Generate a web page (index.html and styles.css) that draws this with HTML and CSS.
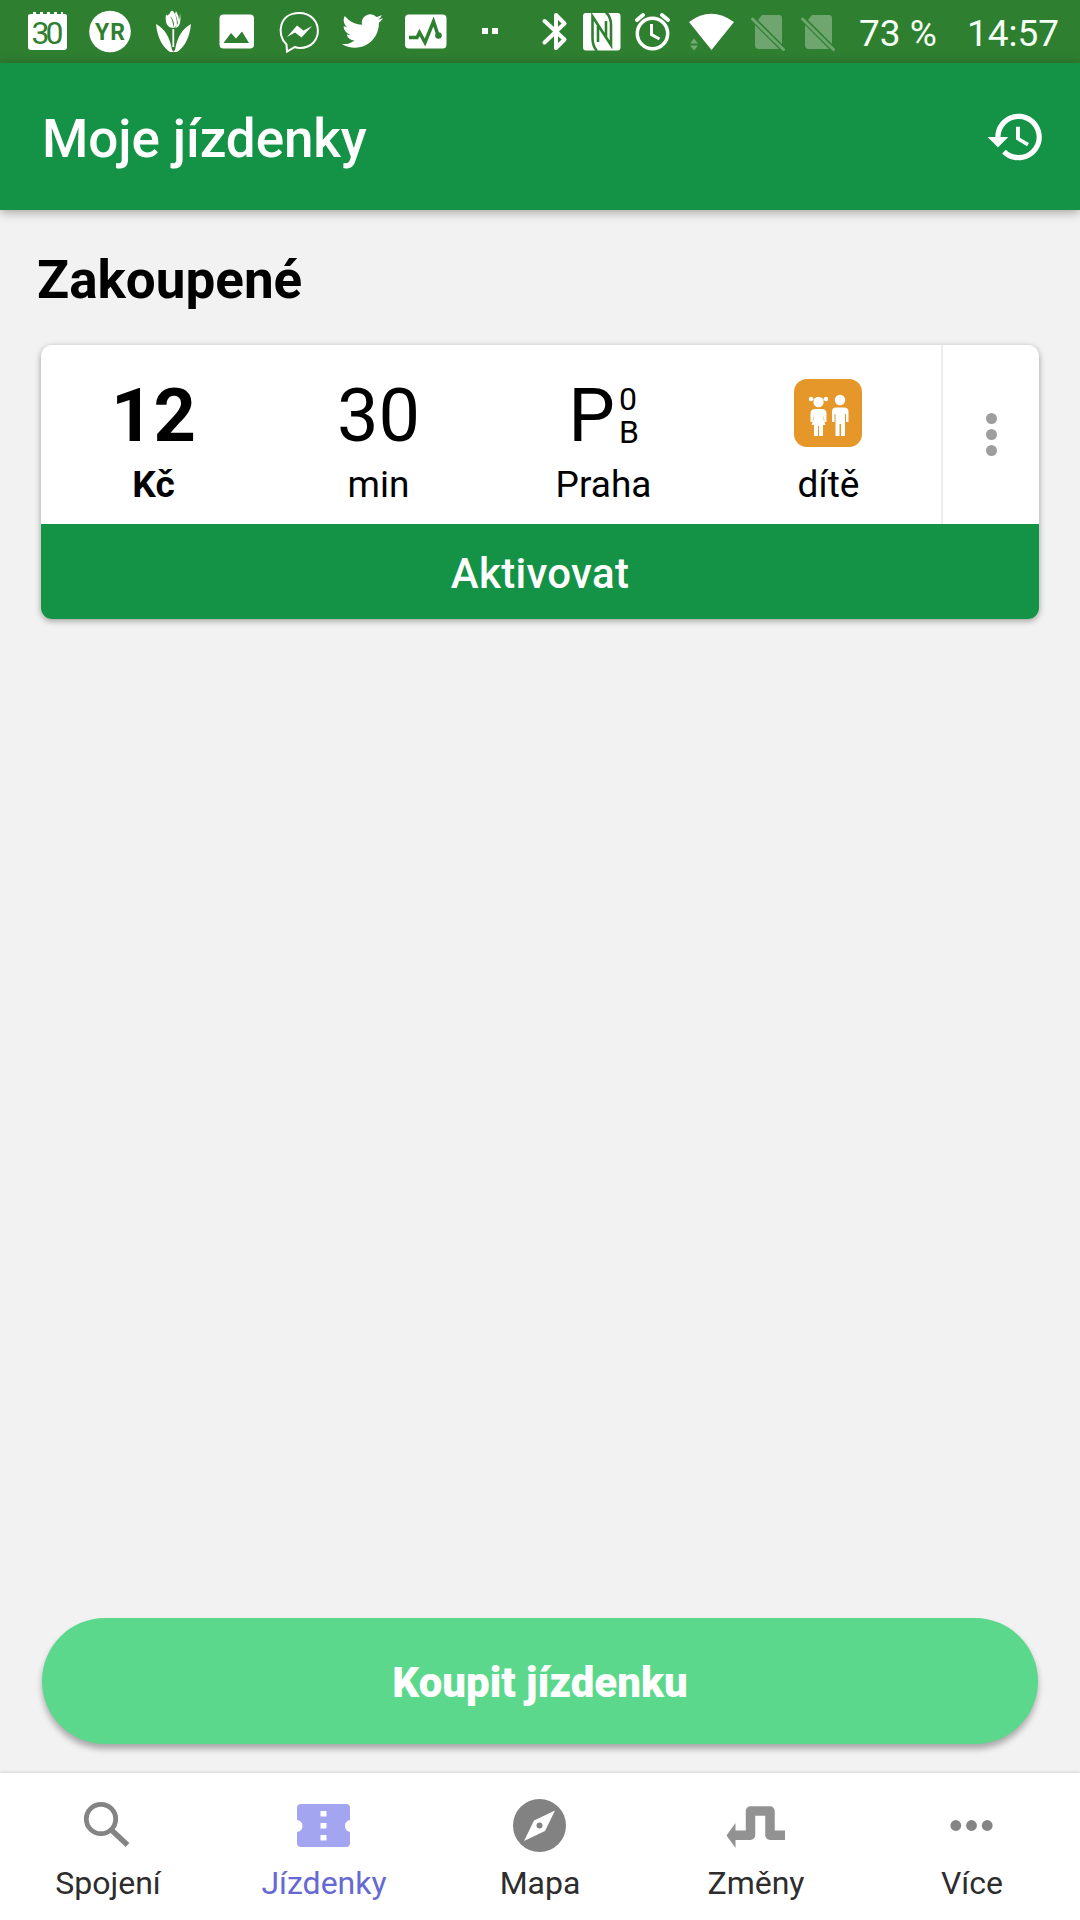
FILE: index.html
```html
<!DOCTYPE html>
<html lang="cs">
<head>
  <meta charset="UTF-8">
  <title>Moje jízdenky</title>
  <link rel="stylesheet" href="styles.css">
</head>
<body>

  <div class="status-bar">
    <div class="status-left">
      <svg viewBox="0 0 48 48">
        <path fill="#fff" d="M8 6h2V4h3v2h4V4h3v2h4V4h3v2h4V4h3v2h4V4h2v2h2q2 0 2 2v31q0 3-3 3H8q-3 0-3-3V8q0-2 3-2z"/>
        <text x="24.5" y="35.5" class="cal-text" textLength="32">30</text>
      </svg>
      <svg viewBox="0 0 48 48">
        <circle cx="24" cy="23.5" r="20.8" fill="#fff"/>
        <text x="24" y="32" class="yr-text" textLength="30">YR</text>
      </svg>
      <svg viewBox="0 0 48 48" fill="#fff">
        <path d="M17 6q1 3 3 0l3 6 2 8q-10 0-8-14zM21 5q1-3 3-2 4 5 4 14l-3 3q1-8-5-13zM27 3q3 5 3 9l-1 4q-1-7-3-10zM31 5q2 14-5 15 5-6 5-15z"/>
        <path d="M23.4 21h1.8v18h-1.8zM7 16q13 7 16 26l2 2h-4Q9 36 7 16zM42 16q-13 7-16 26l-2 2h4Q40 36 42 16z"/>
      </svg>
      <svg viewBox="0 0 48 48">
        <rect x="7.5" y="6.5" width="34.5" height="34" rx="4" fill="#fff"/>
        <path fill="#2f7f31" d="M11.5 35L19 25l5 5.5 6-7L37 35z"/>
      </svg>
      <svg viewBox="0 0 48 48">
        <path fill="none" stroke="#fff" stroke-width="2" d="M11.5 36.5C1 27 4 5 24 5c25 0 25 35 1 35q-3 0-5-1l-8 4.5z"/>
        <path fill="#fff" d="M12 29l10-11.5 6.500 5L37 18 26.500 29.500 20 24.500z"/>
      </svg>
      <svg viewBox="0 0 48 48">
        <path fill="#fff" transform="translate(4 2.5) scale(1.71)" d="M23.950 4.570a10 10 0 01-2.820.770 4.960 4.960 0 002.160-2.720c-.950.550-2 .950-3.130 1.180a4.920 4.920 0 00-8.380 4.480C7.690 8.090 4.070 6.130 1.640 3.160a4.820 4.820 0 00-.670 2.480c0 1.710.870 3.210 2.190 4.100a4.900 4.900 0 01-2.230-.620v.060a4.920 4.920 0 003.950 4.830 5 5 0 01-2.210.080 4.940 4.940 0 004.600 3.420A9.870 9.870 0 010 19.540a14 14 0 007.560 2.210c9.050 0 14-7.500 14-13.980 0-.210 0-.420-.020-.630a9.940 9.940 0 002.460-2.550z"/>
      </svg>
      <svg viewBox="0 0 48 48">
        <rect x="4" y="6.5" width="41.500" height="34" rx="4" fill="#fff"/>
        <path fill="none" stroke="#2f7f31" stroke-width="3.5" d="M8 29.500h8l2.500-5L24 34.500l8.500-21L37 27"/>
        <circle cx="37.500" cy="27.500" r="3.300" fill="#2f7f31"/>
      </svg>
      <svg viewBox="0 0 48 48">
        <path fill="#fff" d="M18 20h6v6h-6zM28 20h6v6h-6z"/>
      </svg>
    </div>
    <div class="status-right">
      <svg viewBox="0 0 48 48">
        <path fill="none" stroke="#fff" stroke-width="4" stroke-linecap="round" stroke-linejoin="round" d="M14.500 13l20 18.500-8.500 8.500V7l8.500 8.500-20 19"/>
      </svg>
      <svg viewBox="0 0 48 48">
        <rect x="3" y="5" width="37.500" height="37.500" rx="3" fill="#fff"/>
        <path fill="none" stroke="#2f7f31" stroke-width="2.600" d="M17 43q-4.500-5-4.500-13V8.500L31 37V17q0-8-5-12.500M18 34V18M26 29V13"/>
      </svg>
      <svg viewBox="0 0 48 48">
        <circle cx="22.500" cy="25.500" r="15.200" fill="none" stroke="#fff" stroke-width="3.500"/>
        <path fill="none" stroke="#fff" stroke-width="3" d="M21.500 16v10.500l8 4.500"/>
        <path fill="none" stroke="#fff" stroke-width="4" stroke-linecap="round" d="M7 12l6-5M38 12l-6-5"/>
      </svg>
      <svg class="wifi" viewBox="0 0 58 48">
        <path fill="#fff" d="M9 14q22-16.500 45 0L31.500 42z"/>
        <path fill="#74a974" d="M10 35.500l4-5 4 5zM10 37.500l4 5 4-5z"/>
      </svg>
      <svg viewBox="0 0 48 48">
        <path fill="#6fa66f" d="M22 7h17q3 0 3 3v26L18 12zM15 17l24 24H19q-4 0-4-4z"/>
        <path stroke="#6fa66f" stroke-width="3" stroke-linecap="round" d="M12.500 11l31 30.500"/>
      </svg>
      <svg viewBox="0 0 48 48">
        <path fill="#6fa66f" d="M22 7h17q3 0 3 3v26L18 12zM15 17l24 24H19q-4 0-4-4z"/>
        <path stroke="#6fa66f" stroke-width="3" stroke-linecap="round" d="M12.500 11l31 30.500"/>
      </svg>
      <span class="battery">73 %</span>
      <span class="clock">14:57</span>
    </div>
  </div>

  <header class="app-header">
    <h1>Moje jízdenky</h1>
    <svg class="history-icon" viewBox="0 0 24 24" fill="#fff">
      <path d="M13 3c-4.970 0-9 4.030-9 9H1l3.890 3.890.07.14L9 12H6c0-3.870 3.130-7 7-7s7 3.130 7 7-3.130 7-7 7c-1.930 0-3.680-.79-4.940-2.060l-1.420 1.420C8.270 19.990 10.510 21 13 21c4.970 0 9-4.030 9-9s-4.030-9-9-9zm-1 5v5l4.280 2.540.72-1.210-3.500-2.080V8H12z"/>
    </svg>
  </header>

  <main class="content">
    <h2>Zakoupené</h2>
    <div class="ticket">
      <div class="ticket-body">
        <div class="ticket-col price">
          <div class="value">12</div>
          <div class="label">Kč</div>
        </div>
        <div class="ticket-col">
          <div class="value">30</div>
          <div class="label">min</div>
        </div>
        <div class="ticket-col">
          <div class="value zone">
            <span>P</span>
            <div class="zone-sub"><span>0</span><span>B</span></div>
          </div>
          <div class="label">Praha</div>
        </div>
        <div class="ticket-col">
          <div class="value">
            <svg class="child-icon" viewBox="0 0 68 68">
              <rect width="68" height="68" rx="13" fill="#e59729"/>
              <g fill="#fff">
                <circle cx="24.500" cy="23" r="5.200"/>
                <circle cx="17" cy="20" r="2.200"/>
                <circle cx="32" cy="20" r="2.200"/>
                <path d="M17 19.500l5 2v-1.500zM32 19.500l-5 2v-1.500z"/>
                <path d="M21 30h7q4 0 4.500 4v9h-2l-1-7v4l2 6h-2.500v11h-4V47h-1v10h-4V46h-2.500l2-6v-4l-1 7h-2v-9q.5-4 4.500-4z"/>
                <circle cx="46" cy="21" r="5.200"/>
                <path d="M42 28.500h8q4.500 0 4.500 4V43h-2.500v-8h-1v22h-4V45h-1.500v12h-4V35h-1v8H38V32.500q0-4 4-4z"/>
              </g>
            </svg>
          </div>
          <div class="label">dítě</div>
        </div>
        <div class="ticket-menu">
          <span></span><span></span><span></span>
        </div>
      </div>
      <button class="activate-btn">Aktivovat</button>
    </div>
    <button class="buy-btn">Koupit jízdenku</button>
  </main>

  <nav class="bottom-nav">
    <a class="nav-item">
      <svg viewBox="0 0 60 54">
        <circle cx="23" cy="20" r="14.700" fill="none" stroke="#848484" stroke-width="4.800"/>
        <path stroke="#848484" stroke-width="5.500" d="M34 31.500l15.500 14.500"/>
      </svg>
      <span>Spojení</span>
    </a>
    <a class="nav-item active">
      <svg viewBox="0 0 60 54">
        <path fill="#a3a5f1" d="M7 5h45q4 0 4 4v12q-5 1-5 6t5 6v11q0 4-4 4H7q-4 0-4-4V33q5.500-1 5.500-6T3 21V9q0-4 4-4z"/>
        <path fill="#fff" d="M26.500 12h6v5.500h-6zM26.500 24h6v5.500h-6zM26.500 36h6v5.500h-6z"/>
      </svg>
      <span>Jízdenky</span>
    </a>
    <a class="nav-item">
      <svg viewBox="0 0 60 54">
        <circle cx="29.500" cy="26.500" r="26.500" fill="#828282"/>
        <path fill="#fff" d="M45 11.500L35 32 14 42l10-20.500z"/>
        <circle cx="29.500" cy="26.500" r="3" fill="#828282"/>
      </svg>
      <span>Mapa</span>
    </a>
    <a class="nav-item">
      <svg viewBox="0 0 60 54">
        <path fill="none" stroke="#929292" stroke-width="9.500" stroke-linejoin="round" d="M8 36.200h16.500V12h19.500v24.200h15"/>
        <path fill="#929292" d="M.5 36.500L9.500 24v25z"/>
      </svg>
      <span>Změny</span>
    </a>
    <a class="nav-item">
      <svg viewBox="0 0 60 54" fill="#858585">
        <circle cx="13.800" cy="26.500" r="5.400"/>
        <circle cx="29.500" cy="26.500" r="5.400"/>
        <circle cx="45.200" cy="26.500" r="5.400"/>
      </svg>
      <span>Více</span>
    </a>
  </nav>

</body>
</html>
```

FILE: styles.css
```css
* {
  margin: 0;
  padding: 0;
  box-sizing: border-box;
}

body {
  font-family: Roboto, 'Noto Sans', sans-serif;
  background: #f2f2f2;
  height: 1920px;
  display: flex;
  flex-direction: column;
  overflow: hidden;
}

svg {
  display: block;
  flex-shrink: 0;
}

button {
  border: none;
  font-family: inherit;
  color: #fff;
  cursor: pointer;
}

/* status bar */
.status-bar {
  height: 63px;
  background: #2f7f31;
  padding: 8px 22px 0 23px;
  display: flex;
  justify-content: space-between;
}

.status-bar svg {
  width: 48px;
  height: 48px;
}

.status-bar .wifi {
  width: 58px;
}

.status-left {
  display: flex;
  gap: 15px;
}

.status-right {
  display: flex;
  gap: 2px;
  color: #f5fff5;
  font-size: 37px;
  line-height: 51px;
  white-space: nowrap;
}

.battery {
  width: 106px;
  padding-left: 19px;
}

.clock {
  width: 110px;
  padding-left: 19px;
}

.cal-text {
  font-size: 32px;
  font-weight: 400;
  text-anchor: middle;
  fill: #2f7f31;
}

.yr-text {
  font-size: 23px;
  font-weight: 700;
  text-anchor: middle;
  fill: #2f7f31;
}

/* header */
.app-header {
  height: 147px;
  background: #149246;
  padding: 0 33px 0 42px;
  display: flex;
  align-items: center;
  justify-content: space-between;
  box-shadow: 0 2px 10px rgba(0, 0, 0, 0.35);
}

.app-header h1 {
  color: #fff;
  font-size: 53px;
  font-weight: 500;
  letter-spacing: -0.1px;
  padding-top: 5px;
}

.history-icon {
  width: 62px;
  height: 62px;
}

/* content */
.content {
  flex: 1;
  display: flex;
  flex-direction: column;
  padding: 39px 41px 29px;
}

.content h2 {
  margin-left: -4px;
  font-size: 53px;
  font-weight: 700;
  line-height: 62px;
  margin-bottom: 34px;
  color: #000;
}

.ticket {
  background: #fff;
  border-radius: 11px;
  overflow: hidden;
  box-shadow: 0 2px 6px rgba(0, 0, 0, 0.35);
}

.ticket-body {
  height: 179px;
  display: flex;
}

.ticket-col {
  flex: 1;
  padding-top: 31px;
  text-align: center;
  color: #000;
}

.value {
  height: 80px;
  font-size: 74px;
  line-height: 80px;
  display: flex;
  align-items: center;
  justify-content: center;
}

.label {
  margin-top: 8px;
  font-size: 37px;
  line-height: 42px;
}

.price {
  font-weight: 700;
}

.zone {
  gap: 4px;
}

.zone-sub {
  display: flex;
  flex-direction: column;
  font-size: 32px;
  line-height: 33px;
  text-align: left;
}

.child-icon {
  width: 68px;
  height: 68px;
  margin: -6px 1px 0 0;
}

.ticket-menu {
  width: 98px;
  border-left: 2px solid #ececec;
  display: flex;
  flex-direction: column;
  align-items: center;
  justify-content: center;
  gap: 5px;
}

.ticket-menu span {
  width: 11px;
  height: 11px;
  border-radius: 50%;
  background: #9e9e9e;
}

.activate-btn {
  display: block;
  width: 100%;
  height: 95px;
  padding-top: 3px;
  background: #149246;
  font-size: 42px;
  font-weight: 500;
  letter-spacing: 0.3px;
}

.buy-btn {
  margin: auto 1px 0;
  height: 126px;
  padding-top: 3px;
  border-radius: 63px;
  background: #5bd88c;
  box-shadow: 0 5px 6px rgba(0, 0, 0, 0.3);
  font-size: 42px;
  font-weight: 900;
}

/* bottom navigation */
.bottom-nav {
  height: 147px;
  background: #fff;
  box-shadow: 0 -1px 3px rgba(0, 0, 0, 0.12);
  padding-top: 26px;
  display: flex;
}

.nav-item {
  flex: 1;
  display: flex;
  flex-direction: column;
  align-items: center;
  gap: 11px;
  font-size: 32px;
  line-height: 38px;
  color: #2d2d2d;
}

.nav-item svg {
  width: 60px;
  height: 54px;
}

.nav-item.active {
  color: #6769d3;
}
```
